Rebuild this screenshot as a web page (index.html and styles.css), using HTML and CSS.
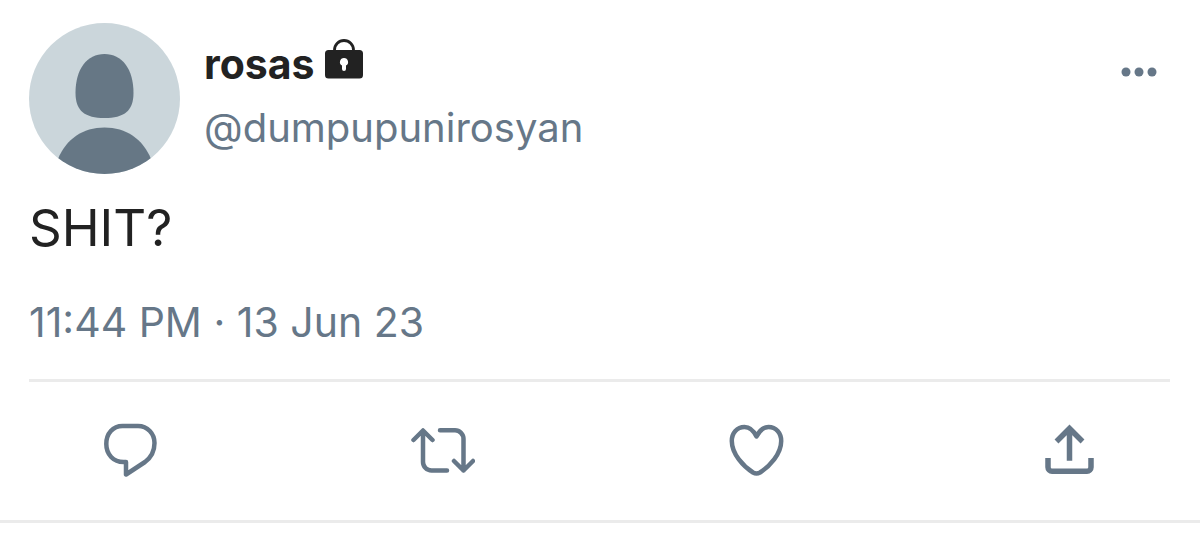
FILE: index.html
```html
<!DOCTYPE html>
<html lang="en">
	<head>
		<meta charset="UTF-8" />
		<meta name="viewport" content="width=device-width, initial-scale=1" />
		<title>rosas (@dumpupunirosyan)</title>
		<link rel="stylesheet" href="styles.css">
	</head>
	<body>
		<article class="tweet">
			<header class="tweet-header">
				<svg class="avatar" viewBox="0 0 151 151" role="img" aria-label="rosas">
					<clipPath id="avatar-clip"><circle cx="75.5" cy="75.5" r="75.5" /></clipPath>
					<g clip-path="url(#avatar-clip)">
						<rect width="151" height="151" fill="#cbd6db" />
						<path fill="#667785" d="M75.5 31C93 31 104.5 46 104.5 70C104.5 88 95 95 75.5 95S46.5 88 46.5 70C46.5 46 58 31 75.5 31z" />
						<path fill="#667785" d="M29 136C37 116 54 104.5 75.5 104.5S114 116 122 136V151H29z" />
					</g>
				</svg>
				<div class="user">
					<div class="name-row">
						<a class="name" href="#">rosas</a>
						<svg class="lock" viewBox="0 0 40 40" role="img" aria-label="Protected account">
							<path d="M10.5 13v-2a9.5 9.5 0 0 1 19 0v2" fill="none" stroke="#222" stroke-width="2.8" />
							<path fill="#222" fill-rule="evenodd" d="M4.500 11h31a3.500 3.500 0 0 1 3.500 3.500V36a3.500 3.500 0 0 1-3.500 3.500h-31A3.500 3.500 0 0 1 1 36V14.500A3.500 3.500 0 0 1 4.500 11zM20 19a4 4 0 0 0-2 7.500V30a2 2 0 0 0 4 0v-3.500A4 4 0 0 0 20 19z" />
						</svg>
					</div>
					<a class="handle" href="#">@dumpupunirosyan</a>
				</div>
				<button class="icon-button more" type="button" aria-label="More">
					<svg viewBox="0 0 36 10">
						<circle cx="5" cy="5" r="4.5" />
						<circle cx="18" cy="5" r="4.5" />
						<circle cx="31" cy="5" r="4.5" />
					</svg>
				</button>
			</header>

			<p class="tweet-text">SHIT?</p>
			<time class="tweet-time" datetime="2023-06-13T23:44">11:44 PM · 13 Jun 23</time>

			<div class="actions">
				<button class="icon-button action" type="button" aria-label="Reply">
					<svg viewBox="0 0 64 64" stroke-width="4.5">
						<path d="M24.5 8H40C49.5 8 56.5 15.5 56.5 25C56.5 33 53 39.5 47 44L28 56.5V44H25.5C15.500 44 8.300 36.500 8.300 26S15 8 24.500 8z" />
					</svg>
				</button>
				<button class="icon-button action" type="button" aria-label="Retweet">
					<svg viewBox="0 0 64 64" stroke-width="4.5">
						<path d="M2.500 22L12 12.500L21.500 22M12 13V44a8.500 8.500 0 0 0 8.500 8.500H36" />
						<path d="M29 12.300H44a8.500 8.500 0 0 1 8.500 8.500V52.500M43 43L52.500 52.500L62 43" />
					</svg>
				</button>
				<button class="icon-button action" type="button" aria-label="Like">
					<svg viewBox="0 0 64 64" stroke-width="4.5">
						<path d="M32.500 18.500C29.500 12.500 25.500 9 20.500 9C13 9 7.800 15 7.800 23C7.800 36 19.500 48.500 29 54.500Q32.500 56.500 36 54.500C45.500 48.500 57.200 36 57.200 23C57.200 15 52 9 44.500 9C39.500 9 35.500 12.500 32.500 18.500z" />
					</svg>
				</button>
				<button class="icon-button action share" type="button" aria-label="Share">
					<svg viewBox="0 0 64 64" stroke-width="5.5">
						<path d="M32.500 42.700V11M19.500 23.500L32.500 10.500L45.500 23.500" />
						<path d="M11 40V49.300a4 4 0 0 0 4 4H50a4 4 0 0 0 4-4V40" />
					</svg>
				</button>
			</div>
		</article>
	</body>
</html>
```

FILE: styles.css
```css
body {
	margin: 0;
	background: #fff;
	color: #222;
	font-family: Inter, 'Liberation Sans', sans-serif;
}

a {
	color: inherit;
	text-decoration: none;
}

.tweet {
	padding: 23px 30px 0 29px;
	border-bottom: 3px solid #ebebeb;
}

.tweet-header {
	display: flex;
	align-items: flex-start;
	gap: 24px;
}

.avatar {
	display: block;
	width: 151px;
	height: 151px;
	flex-shrink: 0;
}

.user {
	flex: 1;
	padding-top: 17px;
}

.name-row {
	display: flex;
	align-items: center;
	gap: 9px;
	height: 48px;
}

.name {
	font-size: 41px;
	font-weight: 700;
	line-height: 48px;
}

.lock {
	width: 40px;
	height: 40px;
	margin-bottom: 10px;
}

.handle {
	display: block;
	margin-top: 16px;
	font-size: 40px;
	line-height: 48px;
	color: #667788;
}

.icon-button {
	display: block;
	padding: 0;
	border: none;
	background: none;
	cursor: pointer;
}

.icon-button svg {
	display: block;
}

.more {
	padding: 44px 13px 0 0;
}

.more svg {
	width: 36px;
	height: 10px;
	fill: #667788;
}

.tweet-text {
	margin: 24px 0 0;
	font-size: 51px;
	line-height: 60px;
}

.tweet-time {
	display: block;
	margin-top: 40px;
	font-size: 41px;
	line-height: 48px;
	color: #667788;
}

.actions {
	display: flex;
	justify-content: space-between;
	margin-top: 33px;
	padding: 36px 69px 38px;
	border-top: 3px solid #ebebeb;
}

.action svg {
	width: 64px;
	height: 64px;
	fill: none;
	stroke: #667788;
	stroke-linecap: round;
	stroke-linejoin: round;
}

.share svg {
	stroke-linecap: butt;
	stroke-linejoin: miter;
}
```
